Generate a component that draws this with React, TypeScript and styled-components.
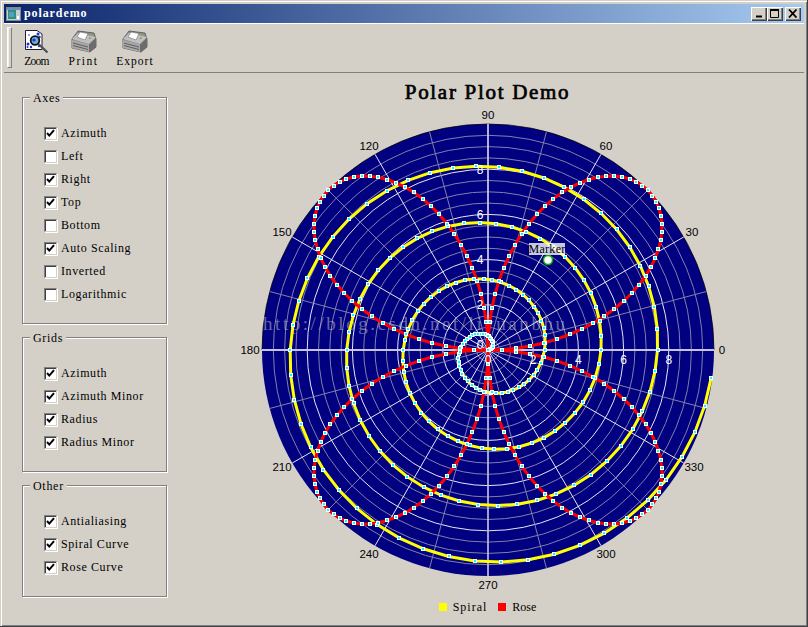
import React from "react";
import styled, { createGlobalStyle } from "styled-components";

const Global = createGlobalStyle`
  html, body { margin: 0; padding: 0; background: #d4d0c8; }
`;

const serif = `"Liberation Serif", "Times New Roman", serif`;

const Window = styled.div`
  box-sizing: border-box;
  width: 808px;
  height: 627px;
  padding: 3px;
  display: flex;
  flex-direction: column;
  background: #d4d0c8;
  border-style: solid;
  border-width: 0 1px 1px 0;
  border-color: #404040;
  box-shadow: inset 1px 1px 0 #d4d0c8, inset 2px 2px 0 #ffffff, inset -1px -1px 0 #808080;
  font-family: ${serif};
  color: #000;
  overflow: hidden;
`;

const TitleBar = styled.div`
  height: 19px;
  margin: 1px 0 0 1px;
  flex: none;
  display: flex;
  align-items: center;
  padding: 0 3px 0 2px;
  background: linear-gradient(90deg, #0a246a 0%, #a6caf0 100%);
`;

const TitleText = styled.span`
  margin-left: 3px;
  font-size: 12px;
  font-weight: 700;
  letter-spacing: 0.9px;
  color: #fff;
  flex: 1;
`;

const CaptionButton = styled.button<{ $gap?: number }>`
  width: 16px;
  height: 14px;
  padding: 0;
  margin-left: ${(p) => p.$gap ?? 0}px;
  border: 0;
  background: #d4d0c8;
  display: flex;
  align-items: center;
  justify-content: center;
  box-shadow: inset 1px 1px 0 #fff, inset -1px -1px 0 #404040, inset -2px -2px 0 #808080;
`;

const Toolbar = styled.div`
  flex: none;
  height: 48px;
  margin-left: 1px;
  display: flex;
  align-items: flex-start;
  padding-left: 3px;
  border-top: 1px solid #fff;
  border-bottom: 1px solid #808080;
`;

const Handle = styled.div`
  width: 5px;
  height: 41px;
  margin: 3px 2px 0 0;
  background: #d4d0c8;
  border-left: 1px solid #fff;
  border-top: 1px solid #fff;
  border-right: 1px solid #808080;
  border-bottom: 1px solid #808080;
  box-sizing: border-box;
  box-shadow: inset 1px 0 0 #f2f0ec;
`;

const ToolButton = styled.div<{ $w: number }>`
  display: flex;
  flex-direction: column;
  align-items: center;
  width: ${(p) => p.$w}px;
  padding-top: 6px;
`;

const ToolLabel = styled.span<{ $ls: number }>`
  font-size: 11.5px;
  letter-spacing: ${(p) => p.$ls}px;
  line-height: 13px;
  margin-top: 1px;
`;

const Main = styled.div`
  flex: 1;
  display: flex;
  min-height: 0;
`;

const Sidebar = styled.div`
  width: 168px;
  flex: none;
  box-sizing: border-box;
  padding: 24px 0 0 19px;
  display: flex;
  flex-direction: column;
  gap: 13px;
`;

const Group = styled.div`
  position: relative;
  width: 145px;
  padding: 24px 0 17px 21px;
  box-sizing: border-box;
  border: 1px solid #808080;
  box-shadow: 1px 1px 0 #fff, inset 1px 1px 0 #fff;
`;

const GroupTitle = styled.span`
  position: absolute;
  top: -6px;
  left: 7px;
  padding: 0 3px;
  height: 13px;
  line-height: 13px;
  font-size: 12px;
  letter-spacing: 0.7px;
  background: #d4d0c8;
`;

const CheckRow = styled.div`
  height: 23px;
  display: flex;
  align-items: center;
  gap: 4px;
  font-size: 12px;
  letter-spacing: 0.6px;
`;

const CheckBox = styled.span`
  width: 13px;
  height: 13px;
  box-sizing: border-box;
  flex: none;
  background: #fff;
  border-style: solid;
  border-width: 1px;
  border-color: #808080 #d4d0c8 #d4d0c8 #808080;
  box-shadow: inset 1px 1px 0 #404040, 1px 1px 0 #fff;
  display: flex;
  align-items: center;
  justify-content: center;
`;

const PlotPanel = styled.div`
  flex: 1;
  display: flex;
  flex-direction: column;
  align-items: center;
  min-width: 0;
`;

const PlotTitle = styled.div`
  height: 18px;
  margin-top: 9px;
  flex: none;
  font-size: 21px;
  line-height: 20px;
  font-weight: 400;
  letter-spacing: 1.7px;
  -webkit-text-stroke: 0.7px #000;
`;

const PlotSvg = styled.svg`
  width: 500px;
  height: 500px;
  flex: none;
  overflow: visible;
`;

const Legend = styled.div`
  display: flex;
  align-items: center;
  height: 14px;
  font-size: 12px;
`;

const Swatch = styled.span<{ $c: string }>`
  width: 8px;
  height: 8px;
  background: ${(p) => p.$c};
  margin-right: 6px;
`;

const LegendItem = styled.div<{ $ls: number }>`
  display: flex;
  align-items: center;
  letter-spacing: ${(p) => p.$ls}px;
  margin-right: 11px;
  &:last-child { margin-right: 0; }
`;

const groups = [
  { title: "Axes", items: [["Azimuth", 1], ["Left", 0], ["Right", 1], ["Top", 1], ["Bottom", 0], ["Auto Scaling", 1], ["Inverted", 0], ["Logarithmic", 0]] },
  { title: "Grids", items: [["Azimuth", 1], ["Azimuth Minor", 1], ["Radius", 1], ["Radius Minor", 1]] },
  { title: "Other", items: [["Antialiasing", 1], ["Spiral Curve", 1], ["Rose Curve", 1]] },
] as { title: string; items: [string, number][] }[];

const R = 226;
const U = R / 10;
const pt = (deg: number, r: number) => {
  const a = (deg * Math.PI) / 180;
  return [r * U * Math.cos(a), -r * U * Math.sin(a)];
};
const spiral = Array.from({ length: 200 }, (_, i) => pt(7.2 * i, (10 * i) / 200));
const rose = Array.from({ length: 200 }, (_, i) => {
  const a = 1.8 * i;
  return pt(a, 10 * Math.abs(Math.sin((2 * a * Math.PI) / 180)));
});
const poly = (p: number[][]) => p.map((q) => q.map((v) => v.toFixed(1)).join(",")).join(" ");

const azLabels: [string, number, number][] = [
  ["90", 0, -235], ["120", -119, -204], ["60", 118, -204], ["150", -206, -118], ["30", 204, -118],
  ["180", -238, 0], ["0", 234, 0], ["210", -206, 117], ["330", 206, 117], ["240", -119, 204],
  ["300", 118, 204], ["270", 0, 235],
];

const Marks = ({ pts }: { pts: number[][] }) => (
  <g shapeRendering="crispEdges">
    {pts.map((q, i) => {
      const x = Math.round(q[0]);
      const y = Math.round(q[1]);
      return (
        <g key={i}>
          <rect x={x - 2} y={y - 2} width={4} height={4} fill="#fff" />
          <rect x={x - 1} y={y - 1} width={2} height={2} fill="#00ffff" />
        </g>
      );
    })}
  </g>
);

const Plot = () => {
  const rings = Array.from({ length: 19 }, (_, i) => (i + 1) * 0.5);
  const spokes = Array.from({ length: 24 }, (_, i) => i * 15);
  return (
    <PlotSvg viewBox="-250 -250 500 500">
      <circle r={R} fill="#000080" />
      <path d={`M ${-R} 0 A ${R} ${R} 0 0 1 ${R} 0`} fill="none" stroke="#000" strokeOpacity={0.7} strokeWidth={1} />
      {rings.map((r) => (
        <circle key={r} r={r * U} fill="none" stroke={r % 2 === 0 ? "#ffffff" : "#8080aa"} strokeWidth={1} strokeOpacity={r % 2 === 0 ? 0.9 : 1} />
      ))}
      {spokes.map((d) => {
        const [x, y] = pt(d, 10);
        return <line key={d} x1={0} y1={0} x2={x} y2={y} stroke={d % 30 === 0 ? "#ffffff" : "#8080aa"} strokeWidth={1} strokeOpacity={d % 30 === 0 ? 0.9 : 1} />;
      })}
      <line x1={-R} y1={0} x2={R} y2={0} stroke="#c4c4e4" strokeWidth={2} />
      <line x1={0} y1={0} x2={0} y2={-R} stroke="#c4c4e4" strokeWidth={1.5} />
      <line x1={0} y1={0} x2={0} y2={R} stroke="#b0b0d8" strokeWidth={1.5} />
      <text x={-225} y={-20} fontFamily={serif} fontSize={19} textLength={302} lengthAdjust="spacing" fill="#d0d0d0" fillOpacity={0.5}>http://blog.csdn.net/liyuanbhu</text>
      <polyline points={poly(spiral)} fill="none" stroke="#ffff00" strokeWidth={3} />
      <polyline points={poly([...rose, rose[0]])} fill="none" stroke="#ff0000" strokeWidth={3} />
      <Marks pts={spiral} />
      <Marks pts={rose} />
      <g fontFamily={`"Liberation Sans", sans-serif`} fontSize={12} fill="#fff" textAnchor="middle">
        {[2, 4, 6, 8].map((v) => (
          <g key={v}>
            <text x={-8} y={-v * U + 4.5}>{v}</text>
            <text x={v * U} y={14}>{v}</text>
          </g>
        ))}
        <text x={0} y={14}>0</text>
        <text x={-8} y={-1}>0</text>
      </g>
      <g fontFamily={`"Liberation Sans", sans-serif`} fontSize={11.5} fill="#000" textAnchor="middle">
        {azLabels.map(([t, x, y]) => (
          <text key={t} x={x} y={y + 4}>{t}</text>
        ))}
      </g>
      <circle cx={60} cy={-90} r={4.5} fill="#fff" stroke="#00b000" strokeWidth={1.5} />
      <rect x={41} y={-107} width={36} height={12} fill="#fff" fillOpacity={0.78} />
      <text x={59} y={-97.5} fontFamily={serif} fontSize={12} letterSpacing={0.3} textAnchor="middle" fill="#000">Marker</text>
    </PlotSvg>
  );
};

const CheckMark = () => (
  <svg width="9" height="9" viewBox="0 0 9 9">
    <path d="M1 4 L3.3 6.6 L8 1.2" fill="none" stroke="#000" strokeWidth="2" />
  </svg>
);

const AppIcon = () => (
  <svg width="15" height="14" viewBox="0 0 15 14">
    <rect x="0.5" y="0.5" width="14" height="13" fill="#c8d0d0" stroke="#808890" />
    <rect x="1" y="1" width="13" height="2" fill="#7090b0" />
    <rect x="2" y="3" width="8" height="9" fill="#309080" />
    <rect x="3" y="5" width="5" height="5" fill="#50a0c0" />
    <rect x="11" y="9" width="2" height="3" fill="#ffffff" />
  </svg>
);

const ZoomIcon = () => (
  <svg width="26" height="24" viewBox="0 0 26 24">
    <path d="M1.5 0.5 H13 L18 4 V19.5 H1.5 Z" fill="#fff" stroke="#202030" />
    <g fill="#2030d0">
      <circle cx="14" cy="4" r="1.5" /><circle cx="15.5" cy="7" r="1.2" /><circle cx="4" cy="14" r="1.5" />
      <circle cx="7" cy="17" r="1.2" /><circle cx="3.5" cy="17" r="1" /><circle cx="5" cy="5" r="0.8" />
      <circle cx="15" cy="16" r="1.2" />
    </g>
    <circle cx="11" cy="10.5" r="4.3" fill="#70b0d0" stroke="#101018" strokeWidth="1.8" />
    <circle cx="10" cy="10" r="1.6" fill="#2030d0" />
    <path d="M14.5 14 L23.5 22.5" stroke="#505058" strokeWidth="2.4" />
  </svg>
);

const PrinterIcon = () => (
  <svg width="26" height="24" viewBox="0 0 26 24">
    <path d="M1 9 L7 1 L23 3 L25 9 V17 L19 22 L1 18 Z" fill="#909090" stroke="#505050" strokeWidth="0.8" />
    <path d="M1 9 L7 3 L25 7 L18 14 Z" fill="#c0c0c0" />
    <path d="M6 7 L9 2 L17 3.5 L14 10 Z" fill="#ffffff" stroke="#707070" strokeWidth="0.6" />
    <path d="M1 10 L18 14.5 V22 L1 18 Z" fill="#a8a8a8" />
    <path d="M2 13 L17 17 M2 15.5 L17 19.5" stroke="#606060" strokeWidth="1" />
    <path d="M18 14.5 L25 8 V17 L18 22 Z" fill="#6c6c6c" />
    <path d="M20 6 L21 6.5" stroke="#c0c040" strokeWidth="1.6" />
    <path d="M18 8 L19.5 8.5" stroke="#70a040" strokeWidth="1.6" />
  </svg>
);

export default function App() {
  return (
    <>
      <Global />
      <Window>
        <TitleBar>
          <AppIcon />
          <TitleText>polardemo</TitleText>
          <CaptionButton aria-label="Minimize">
            <svg width="10" height="9" viewBox="0 0 10 9"><rect x="2" y="6.5" width="6" height="2" fill="#000" /></svg>
          </CaptionButton>
          <CaptionButton aria-label="Maximize">
            <svg width="10" height="9" viewBox="0 0 10 9"><path d="M0.5 1 H8.5 V8.5 H0.5 Z" fill="none" stroke="#000" /><rect x="0" y="0" width="9" height="2" fill="#000" /></svg>
          </CaptionButton>
          <CaptionButton aria-label="Close" $gap={2}>
            <svg width="10" height="9" viewBox="0 0 10 9"><path d="M1 0.5 L8.5 8.5 M8.5 0.5 L1 8.5" stroke="#000" strokeWidth="1.8" /></svg>
          </CaptionButton>
        </TitleBar>
        <Toolbar>
          <Handle />
          <ToolButton $w={45}><ZoomIcon /><ToolLabel $ls={-0.8}>Zoom</ToolLabel></ToolButton>
          <ToolButton $w={49}><PrinterIcon /><ToolLabel $ls={1.5}>Print</ToolLabel></ToolButton>
          <ToolButton $w={54}><PrinterIcon /><ToolLabel $ls={1}>Export</ToolLabel></ToolButton>
        </Toolbar>
        <Main>
          <Sidebar>
            {groups.map((g) => (
              <Group key={g.title}>
                <GroupTitle>{g.title}</GroupTitle>
                {g.items.map(([label, on]) => (
                  <CheckRow key={label}>
                    <CheckBox>{on ? <CheckMark /> : null}</CheckBox>
                    {label}
                  </CheckRow>
                ))}
              </Group>
            ))}
          </Sidebar>
          <PlotPanel>
            <PlotTitle>Polar Plot Demo</PlotTitle>
            <Plot />
            <Legend>
              <LegendItem $ls={1}><Swatch $c="#ffff00" />Spiral</LegendItem>
              <LegendItem $ls={0}><Swatch $c="#ff0000" />Rose</LegendItem>
            </Legend>
          </PlotPanel>
        </Main>
      </Window>
    </>
  );
}
